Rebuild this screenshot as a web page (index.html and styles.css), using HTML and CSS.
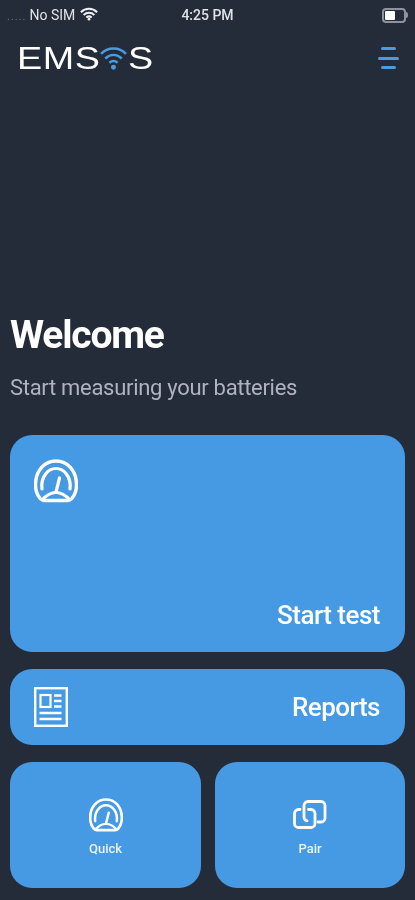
FILE: index.html
```html
<!DOCTYPE html>
<html lang="en">
<head>
<meta charset="utf-8">
<title>EMSOS</title>
<link rel="stylesheet" href="styles.css">
</head>
<body>
<svg class="defs" width="0" height="0" aria-hidden="true">
  <symbol id="gauge" viewBox="0 0 44 44">
    <path d="M10 41.500h24c1.500 0 2.500-.6 3.500-1.600 3-3.400 5-8 5-13.900C42.500 11 33 2 22 2S1.500 11 1.500 26c0 5.900 2 10.500 5 13.900 1 1 2 1.600 3.500 1.600Z" fill="none" stroke="currentColor" stroke-width="3.400" stroke-linejoin="round"/>
    <path d="M8 30C6.500 18 14 9.500 22 9.500S37.500 18 36 30" fill="none" stroke="currentColor" stroke-width="3.200" stroke-linecap="round"/>
    <path d="M22 33L25.500 19" fill="none" stroke="currentColor" stroke-width="3.200" stroke-linecap="round"/>
    <path d="M8 41C13 35.500 17 33.500 22 33.500S31 35.500 36 41" fill="none" stroke="currentColor" stroke-width="3.200"/>
  </symbol>
</svg>
<main class="screen">
  <div class="status">
    <div class="status-left">
      <span class="signal">.....</span>
      <span>No SIM</span>
      <svg class="wifi-small" viewBox="0 0 20 15" aria-hidden="true">
        <path d="M1 5.500C6 .5 14 .5 19 5.500M4 8.500c3.500-3.200 8.500-3.200 12 0M7 11.300c1.800-1.400 4.200-1.400 6 0" fill="none" stroke="currentColor" stroke-width="2.200"/>
        <circle cx="10" cy="13.300" r="1.500" fill="currentColor"/>
      </svg>
    </div>
    <span class="status-time">4:25 PM</span>
    <div class="battery-wrap">
      <div class="battery"><span class="battery-fill"></span></div>
      <span class="battery-nub"></span>
    </div>
  </div>

  <header class="top">
    <div class="logo">
      <span class="logo-text ems">EMS</span>
      <svg class="logo-wifi" viewBox="0 0 26 26" aria-hidden="true">
        <path d="M1 9.500C7.500 2.500 18.500 2.500 25 9.500M5 14c5-4.500 11-4.500 16 0M9 18c2.500-2 5.500-2 8 0" fill="none" stroke="#4a9be0" stroke-width="2.400"/>
        <circle cx="13" cy="22.500" r="2.400" fill="#4a9be0"/>
      </svg>
      <span class="logo-text">S</span>
    </div>
    <div class="burger"><span class="bar short"></span><span class="bar"></span><span class="bar short"></span></div>
  </header>

  <section class="intro">
    <h1>Welcome</h1>
    <p>Start measuring your batteries</p>
  </section>

  <section class="actions">
    <div class="card start">
      <svg class="icon-lg"><use href="#gauge"/></svg>
      <span class="label">Start test</span>
    </div>
    <div class="card reports">
      <svg class="icon-doc" viewBox="0 0 34 40" aria-hidden="true">
        <rect x="1.200" y="1.200" width="31.600" height="37.600" fill="none" stroke="currentColor" stroke-width="2.400"/>
        <rect x="6.500" y="8" width="10" height="12" fill="none" stroke="currentColor" stroke-width="2.200"/>
        <path d="M20 8.500h7.500M20 14h7.500M20 19.500h7.500M5.500 26h22M5.500 32h22" fill="none" stroke="currentColor" stroke-width="2.500"/>
      </svg>
      <span class="label">Reports</span>
    </div>
    <div class="row">
      <div class="card small">
        <svg class="icon-sm"><use href="#gauge"/></svg>
        <span class="small-label">Quick</span>
      </div>
      <div class="card small">
        <svg class="icon-link" viewBox="0 0 34 30" aria-hidden="true">
          <path d="M7 9.500H5.500a4 4 0 0 0-4 4v10a4 4 0 0 0 4 4H18a4 4 0 0 0 4-4v-10a4 4 0 0 0-4-4h-2.500" fill="none" stroke="currentColor" stroke-width="2.800" stroke-linecap="round"/>
          <path d="M25 22h3a4 4 0 0 0 4-4V5.500a4 4 0 0 0-4-4H15a4 4 0 0 0-4 4V17a4 4 0 0 0 3 3.800" fill="none" stroke="currentColor" stroke-width="2.800" stroke-linecap="round"/>
        </svg>
        <span class="small-label">Pair</span>
      </div>
    </div>
  </section>
</main>
</body>
</html>
```

FILE: styles.css
```css
* { box-sizing: border-box; }
html, body { margin: 0; height: 100%; }
body {
  background: #252c39;
  color: #fff;
  font-family: Roboto, "Noto Sans", sans-serif;
  overflow: hidden;
}
.defs { position: absolute; }
.screen {
  height: 900px;
  display: flex;
  flex-direction: column;
  padding: 0 10px 12px;
  filter: blur(0.4px);
}
.status {
  height: 30px;
  display: grid;
  grid-template-columns: 1fr auto 1fr;
  align-items: center;
  font-family: Roboto, sans-serif;
  font-size: 14px;
  color: #dfe2e6;
}
.status-left { display: flex; align-items: center; gap: 3px; margin-left: -3px; }
.signal { color: #6a707b; font-size: 11px; letter-spacing: 1px; margin-top: 2px; }
.wifi-small { width: 18px; height: 14px; color: #eef0f2; margin-left: 2px; margin-top: -3px; }
.status-time { font-weight: 500; font-size: 14px; }
.battery-wrap { justify-self: end; display: flex; align-items: center; margin-right: -3px; }
.battery {
  width: 24px;
  height: 15px;
  border: 2px solid #8f949c;
  border-radius: 4px;
  padding: 1px;
}
.battery-fill { display: block; width: 10px; height: 100%; background: #fff; border-radius: 1px; }
.battery-nub { width: 2px; height: 6px; background: #8f949c; border-radius: 0 2px 2px 0; }
.top {
  height: 56px;
  display: flex;
  align-items: center;
  justify-content: space-between;
  padding: 0 6px 0 7px;
}
.logo { display: flex; align-items: center; }
.logo-text {
  display: inline-block;
  font-family: "Liberation Sans", sans-serif;
  font-size: 32px;
  line-height: 30px;
  letter-spacing: 0.500px;
  color: #fff;
  transform: scaleX(1.18);
  transform-origin: left center;
  margin-right: 4px;
}
.logo-text.ems { margin-right: 12px; }
.logo-wifi { width: 27px; height: 27px; flex: none; margin-top: -2px; margin-right: 1px; }
.burger { display: flex; flex-direction: column; align-items: center; gap: 6.500px; width: 22px; }
.bar { display: block; width: 21px; height: 3px; background: #4a9be0; border-radius: 2px; }
.bar.short { width: 15px; }
.intro { margin-top: 223px; height: 126px; }
h1 {
  margin: 0;
  font-size: 39px;
  line-height: 52px;
  font-weight: 700;
  letter-spacing: -1.200px;
}
p {
  margin: 12px 0 0;
  font-size: 22px;
  line-height: 30px;
  font-weight: 400;
  letter-spacing: -0.300px;
  color: #aeb3be;
}
.actions { display: flex; flex-direction: column; gap: 17px; }
.card { background: #4699e3; border-radius: 22px; }
.start {
  height: 217px;
  display: flex;
  flex-direction: column;
  justify-content: space-between;
  padding: 24px 25px 20px 24px;
}
.icon-lg { width: 44px; height: 44px; color: #fff; }
.icon-sm { width: 34px; height: 34px; color: #fff; }
.label {
  align-self: flex-end;
  font-size: 26px;
  line-height: 34px;
  font-weight: 500;
  letter-spacing: -0.500px;
}
.reports {
  height: 76px;
  display: flex;
  align-items: center;
  justify-content: space-between;
  padding: 0 25px 0 24px;
}
.reports .label { align-self: center; }
.icon-doc { width: 34px; height: 40px; color: #fff; }
.row { display: grid; grid-template-columns: 191px 190px; gap: 14px; }
.small {
  height: 126px;
  display: flex;
  flex-direction: column;
  align-items: center;
  padding-top: 36px;
}
.small-label {
  margin-top: 8px;
  font-size: 13px;
  line-height: 18px;
  font-weight: 500;
  color: #eaf3fc;
}
.icon-link { width: 34px; height: 30px; color: #fff; margin-top: 2px; margin-bottom: 2px; }
```
